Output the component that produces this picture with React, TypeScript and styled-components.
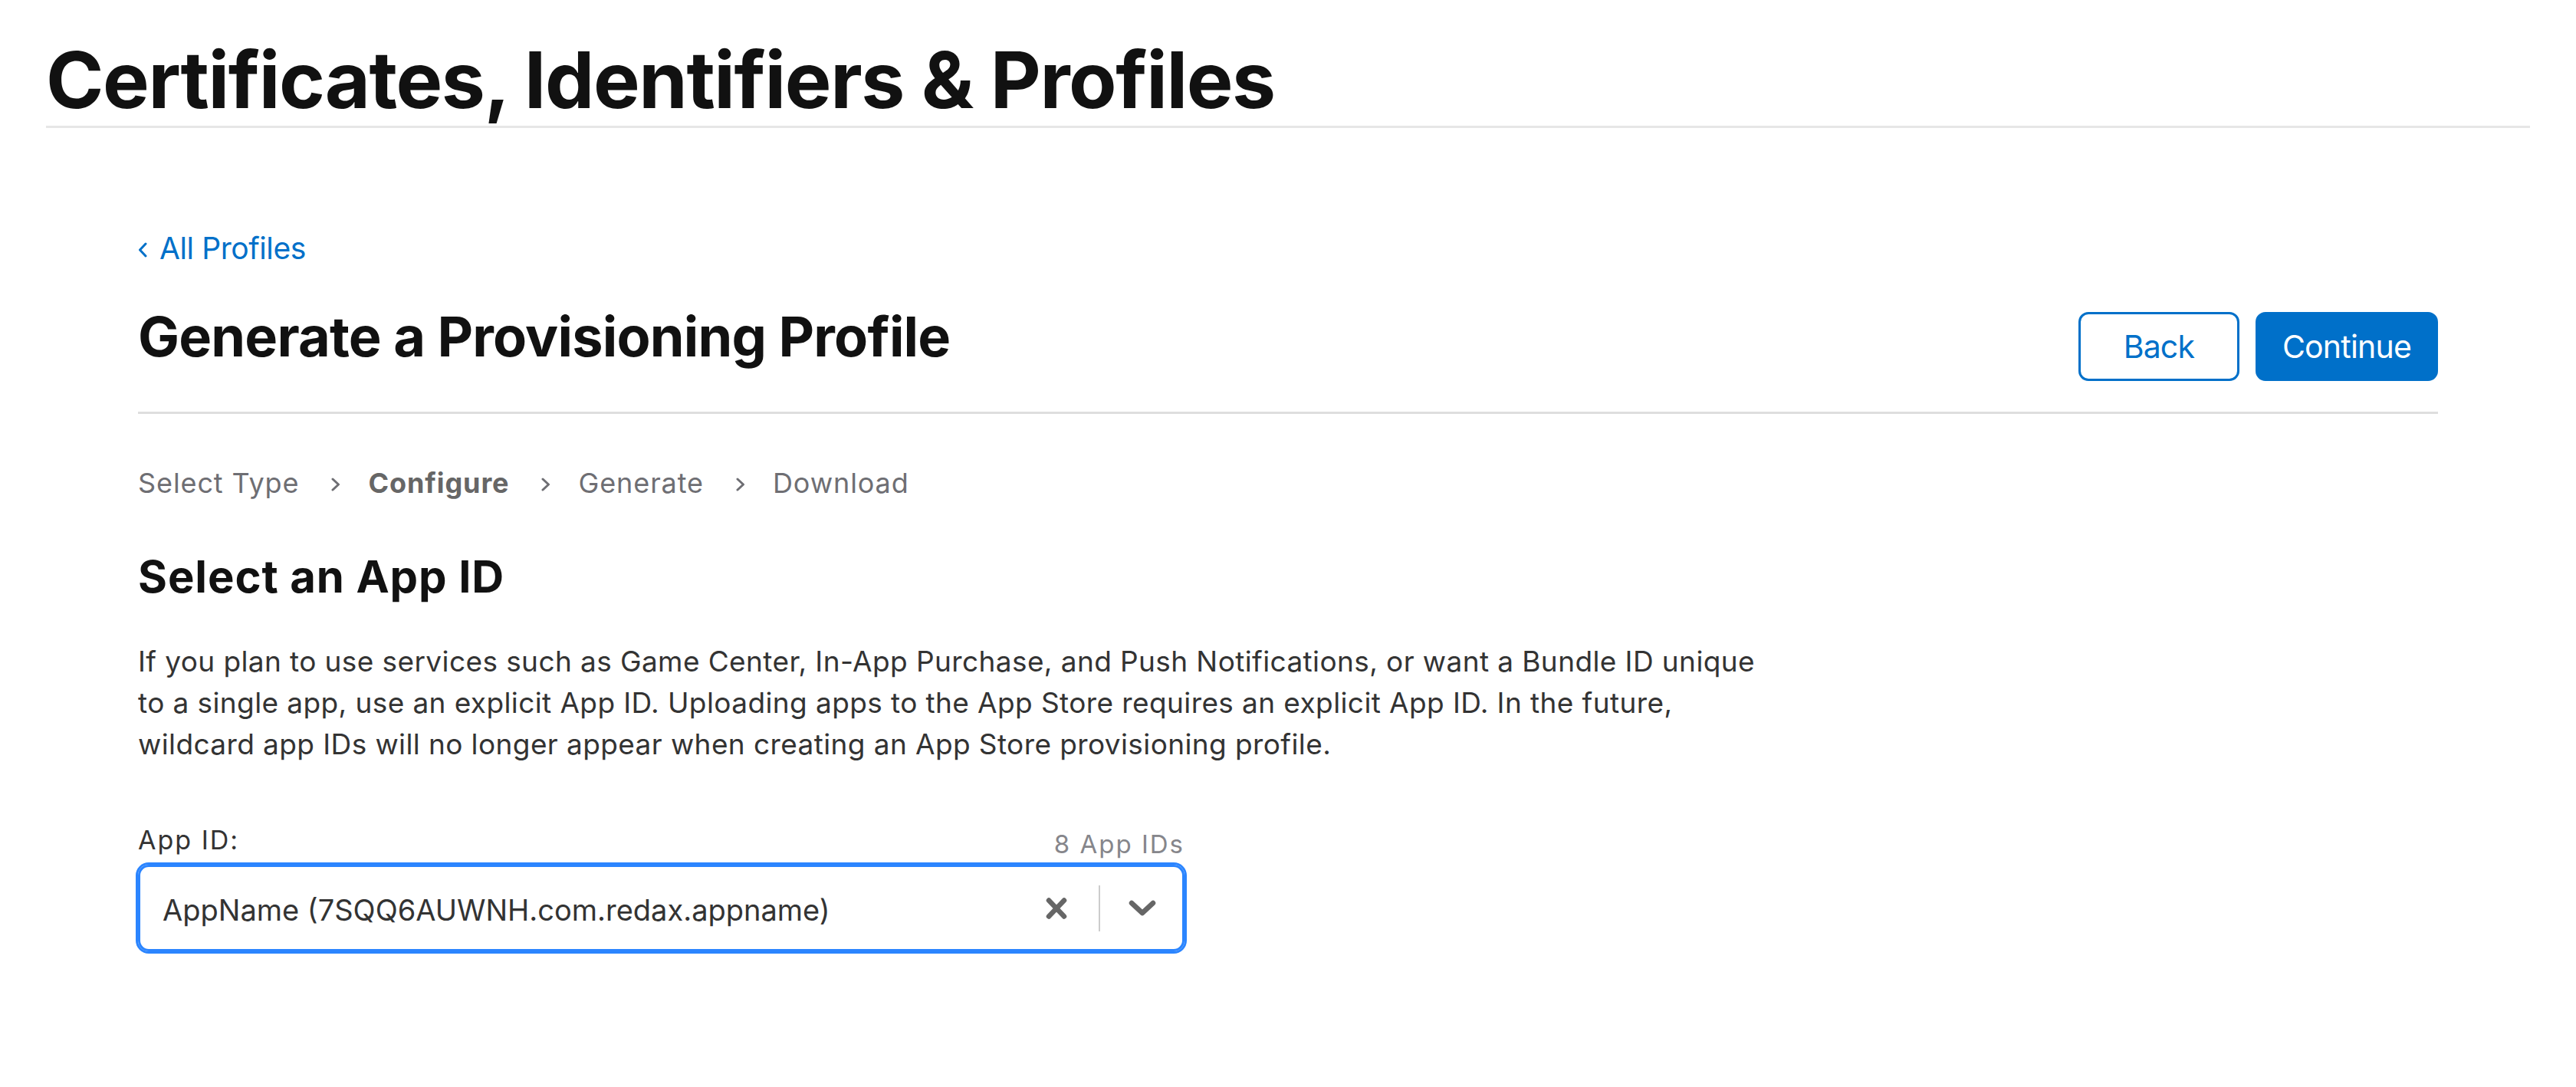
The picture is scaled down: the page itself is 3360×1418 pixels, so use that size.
import React from 'react'
import styled, { createGlobalStyle } from 'styled-components'

const GlobalStyle = createGlobalStyle`
	html, body {
		margin: 0;
		padding: 0;
		background: #ffffff;
	}
	body {
		font-family: Inter, 'Noto Sans', 'Liberation Sans', sans-serif;
		color: #333333;
	}
	* {
		box-sizing: border-box;
	}
`

const steps = [
	{ label: 'Select Type', current: false },
	{ label: 'Configure', current: true },
	{ label: 'Generate', current: false },
	{ label: 'Download', current: false },
]

const ChevronRight = () => (
	<svg width='12' height='18' viewBox='0 0 12 18' fill='none'>
		<polyline points='2,2 9.5,9 2,16' stroke='#6e6e73' strokeWidth='3' strokeLinecap='round' strokeLinejoin='round' />
	</svg>
)

const ChevronLeft = () => (
	<svg width='12' height='22' viewBox='0 0 12 22' fill='none'>
		<polyline points='10,3 2.5,11 10,19' stroke='#0070c9' strokeWidth='3' strokeLinecap='round' strokeLinejoin='round' />
	</svg>
)

const ClearIcon = () => (
	<svg width='28' height='30' viewBox='0 0 28 30' fill='none'>
		<line x1='4' y1='4.5' x2='24' y2='25.5' stroke='#666666' strokeWidth='6.5' strokeLinecap='round' />
		<line x1='24' y1='4.5' x2='4' y2='25.5' stroke='#666666' strokeWidth='6.5' strokeLinecap='round' />
	</svg>
)

const DropIcon = () => (
	<svg width='36' height='22' viewBox='0 0 36 22' fill='none'>
		<polyline points='4,4 18,17 32,4' stroke='#666666' strokeWidth='6.5' strokeLinecap='round' strokeLinejoin='round' />
	</svg>
)

const App: React.FC = () => (
	<>
		<GlobalStyle />
		<Page>
			<SiteTitle>Certificates, Identifiers &amp; Profiles</SiteTitle>
			<Content>
				<BackLink href='#'>
					<ChevronLeft />
					All Profiles
				</BackLink>
				<PageHeader>
					<PageTitle>Generate a Provisioning Profile</PageTitle>
					<Actions>
						<Button>Back</Button>
						<Button $primary>Continue</Button>
					</Actions>
				</PageHeader>
				<Steps>
					{steps.map((step, i) => (
						<React.Fragment key={step.label}>
							{i > 0 && (
								<StepArrow>
									<ChevronRight />
								</StepArrow>
							)}
							<Step $current={step.current}>{step.label}</Step>
						</React.Fragment>
					))}
				</Steps>
				<SectionTitle>Select an App ID</SectionTitle>
				<Description>
					If you plan to use services such as Game Center, In-App Purchase, and Push Notifications, or want a Bundle ID unique
					<br />
					to a single app, use an explicit App ID. Uploading apps to the App Store requires an explicit App ID. In the future,
					<br />
					wildcard app IDs will no longer appear when creating an App Store provisioning profile.
				</Description>
				<Field>
					<FieldHead>
						<Label>App ID:</Label>
						<Count>8 App IDs</Count>
					</FieldHead>
					<Select>
						<SelectValue>AppName (7SQQ6AUWNH.com.redax.appname)</SelectValue>
						<Indicators>
							<IconButton>
								<ClearIcon />
							</IconButton>
							<Divider />
							<IconButton>
								<DropIcon />
							</IconButton>
						</Indicators>
					</Select>
				</Field>
			</Content>
		</Page>
	</>
)

const Page = styled.main`
	padding: 45px 60px 120px;
`

const SiteTitle = styled.h1`
	margin: 0;
	font-size: 102px;
	line-height: 119px;
	font-weight: 700;
	letter-spacing: -1.4px;
	color: #111111;
	border-bottom: 3px solid #e6e6e6;
`

const Content = styled.section`
	padding: 129px 120px 0;
`

const BackLink = styled.a`
	display: inline-flex;
	align-items: center;
	gap: 16px;
	font-size: 39px;
	line-height: 56px;
	letter-spacing: -0.4px;
	color: #0070c9;
	text-decoration: none;
	svg {
		margin-top: 4px;
	}
`

const PageHeader = styled.header`
	display: flex;
	justify-content: space-between;
	align-items: flex-start;
	margin-top: 42px;
	padding-bottom: 40px;
	border-bottom: 3px solid #dedede;
`

const PageTitle = styled.h2`
	margin: 0;
	font-size: 72px;
	line-height: 90px;
	font-weight: 700;
	letter-spacing: -0.8px;
	color: #111111;
`

const Actions = styled.div`
	display: flex;
	gap: 21px;
	margin-top: 13px;
`

const Button = styled.button<{ $primary?: boolean }>`
	height: 90px;
	min-width: 210px;
	padding: 0 32px;
	border-radius: 13px;
	border: 3px solid #0070c9;
	background: ${(p) => (p.$primary ? '#0070c9' : '#ffffff')};
	color: ${(p) => (p.$primary ? '#ffffff' : '#0070c9')};
	font-family: inherit;
	font-size: 41px;
	font-weight: 400;
	letter-spacing: -0.8px;
	cursor: pointer;
`

const Steps = styled.nav`
	display: flex;
	align-items: center;
	margin-top: 65px;
	font-size: 36px;
	line-height: 50px;
	letter-spacing: 0.9px;
`

const Step = styled.span<{ $current?: boolean }>`
	color: ${(p) => (p.$current ? '#666666' : '#6e6e73')};
	font-weight: ${(p) => (p.$current ? 700 : 400)};
`

const StepArrow = styled.span`
	display: flex;
	margin: 4px 36px 0 42px;
`

const SectionTitle = styled.h3`
	margin: 62px 0 0;
	font-size: 58px;
	line-height: 70px;
	font-weight: 700;
	letter-spacing: 0.9px;
	color: #111111;
`

const Description = styled.p`
	margin: 49px 0 0;
	font-size: 37px;
	line-height: 54px;
	letter-spacing: 0.4px;
	color: #333333;
	white-space: nowrap;
`

const Field = styled.div`
	width: 1365px;
	margin-top: 76px;
`

const FieldHead = styled.div`
	display: flex;
	justify-content: space-between;
	align-items: flex-end;
	margin-bottom: 10px;
`

const Label = styled.label`
	font-size: 34px;
	line-height: 44px;
	letter-spacing: 2px;
	color: #333333;
`

const Count = styled.span`
	font-size: 33px;
	line-height: 34px;
	letter-spacing: 2px;
	color: #86868b;
`

const Select = styled.div`
	display: flex;
	align-items: center;
	height: 113px;
	padding: 0 34px 0 29px;
	border: 3px solid #2b85ff;
	border-radius: 14px;
	box-shadow: 0 0 0 3px #2b85ff;
`

const SelectValue = styled.span`
	flex: 1;
	padding-top: 4px;
	font-size: 38px;
	color: #333333;
`

const Indicators = styled.div`
	display: flex;
	align-items: center;
`

const IconButton = styled.span`
	display: flex;
	align-items: center;
`

const Divider = styled.span`
	width: 2px;
	height: 60px;
	margin: 0 37px 0 41px;
	background: #cccccc;
`

export default App
